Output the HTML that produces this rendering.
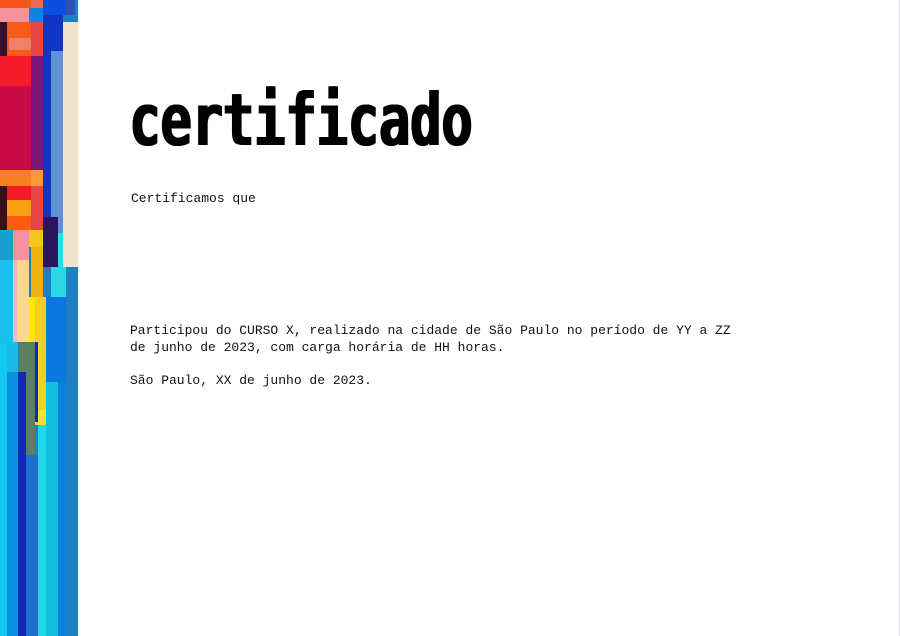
<!DOCTYPE html>
<html><head><meta charset="utf-8"><style>
html,body{margin:0;padding:0;background:#fff;}
body{width:900px;height:636px;position:relative;overflow:hidden;}
.r{position:absolute;}
.t{position:absolute;left:129px;top:80px;font-family:"DejaVu Sans Mono","Liberation Mono",monospace;font-weight:bold;font-size:72px;line-height:80px;color:#000;white-space:nowrap;transform-origin:0 0;transform:scaleX(0.72);text-shadow:1px 0 0 #000,2px 0 0 #000,-1px 0 0 #000;}
.p{position:absolute;left:130px;font-family:"Liberation Mono",monospace;font-size:13px;line-height:17px;color:#111;white-space:nowrap;}
</style></head><body>
<div class="r" style="left:0;top:0;width:78px;height:636px;background:#1e80c0"></div>
<div class="r" style="left:0;top:0;width:31px;height:8px;background:#f5561d"></div>
<div class="r" style="left:31px;top:0;width:12px;height:8px;background:#e86a50"></div>
<div class="r" style="left:0;top:8px;width:29px;height:14px;background:#f5929a"></div>
<div class="r" style="left:29px;top:8px;width:14px;height:14px;background:#0a86e0"></div>
<div class="r" style="left:0;top:22px;width:7px;height:34px;background:#3a1028"></div>
<div class="r" style="left:7px;top:22px;width:24px;height:34px;background:#f95a1a"></div>
<div class="r" style="left:9px;top:38px;width:22px;height:12px;background:#f0806a"></div>
<div class="r" style="left:31px;top:22px;width:12px;height:34px;background:#e84545"></div>
<div class="r" style="left:0;top:56px;width:31px;height:30px;background:#f71a2a"></div>
<div class="r" style="left:0;top:86px;width:31px;height:84px;background:#cc0a45"></div>
<div class="r" style="left:31px;top:56px;width:12px;height:114px;background:#7a1575"></div>
<div class="r" style="left:0;top:170px;width:31px;height:16px;background:#f98020"></div>
<div class="r" style="left:31px;top:170px;width:12px;height:16px;background:#f99a3a"></div>
<div class="r" style="left:0;top:186px;width:7px;height:44px;background:#3a1018"></div>
<div class="r" style="left:7px;top:186px;width:24px;height:14px;background:#f51a2a"></div>
<div class="r" style="left:7px;top:200px;width:24px;height:16px;background:#f9a010"></div>
<div class="r" style="left:7px;top:216px;width:24px;height:14px;background:#fb5a10"></div>
<div class="r" style="left:31px;top:186px;width:12px;height:44px;background:#e84545"></div>
<div class="r" style="left:0;top:230px;width:13px;height:30px;background:#1aa0d0"></div>
<div class="r" style="left:13px;top:230px;width:16px;height:30px;background:#f890a0"></div>
<div class="r" style="left:29px;top:230px;width:14px;height:17px;background:#f0c81a"></div>
<div class="r" style="left:31px;top:247px;width:12px;height:50px;background:#f0b010"></div>
<div class="r" style="left:0;top:260px;width:13px;height:84px;background:#18c0ee"></div>
<div class="r" style="left:13px;top:260px;width:4px;height:82px;background:#fbb0d0"></div>
<div class="r" style="left:17px;top:260px;width:12px;height:82px;background:#fdd88a"></div>
<div class="r" style="left:29px;top:297px;width:6px;height:45px;background:#fde800"></div>
<div class="r" style="left:35px;top:297px;width:11px;height:128px;background:#f5d020"></div>
<div class="r" style="left:43px;top:0;width:23px;height:15px;background:#0c4ee0"></div>
<div class="r" style="left:66px;top:0;width:9px;height:15px;background:#3050b0"></div>
<div class="r" style="left:43px;top:15px;width:20px;height:202px;background:#1035c0"></div>
<div class="r" style="left:51px;top:51px;width:12px;height:182px;background:#6090d8"></div>
<div class="r" style="left:63px;top:22px;width:15px;height:245px;background:#f0e2cc"></div>
<div class="r" style="left:43px;top:217px;width:15px;height:50px;background:#2a1560"></div>
<div class="r" style="left:58px;top:233px;width:5px;height:34px;background:#2ad8e8"></div>
<div class="r" style="left:51px;top:267px;width:15px;height:30px;background:#2ad8e8"></div>
<div class="r" style="left:46px;top:297px;width:20px;height:85px;background:#0a78e0"></div>
<div class="r" style="left:0;top:344px;width:7px;height:292px;background:#10c8f0"></div>
<div class="r" style="left:7px;top:342px;width:11px;height:30px;background:#1ab8e8"></div>
<div class="r" style="left:7px;top:372px;width:11px;height:264px;background:#0a90e0"></div>
<div class="r" style="left:18px;top:372px;width:8px;height:264px;background:#1428b8"></div>
<div class="r" style="left:19px;top:342px;width:16px;height:30px;background:#5a8060"></div>
<div class="r" style="left:26px;top:372px;width:9px;height:83px;background:#5a8060"></div>
<div class="r" style="left:26px;top:455px;width:12px;height:181px;background:#2070d0"></div>
<div class="r" style="left:35px;top:342px;width:3px;height:80px;background:#1428b8"></div>
<div class="r" style="left:38px;top:410px;width:8px;height:15px;background:#f5e030"></div>
<div class="r" style="left:38px;top:425px;width:8px;height:211px;background:#20d8e8"></div>
<div class="r" style="left:46px;top:382px;width:12px;height:254px;background:#10c0e0"></div>
<div class="r" style="left:58px;top:382px;width:8px;height:254px;background:#0a80e0"></div>
<div class="r" style="left:899px;top:0;width:1px;height:636px;background:#d8dce4"></div>

<div class="t">certificado</div>
<div class="p" style="top:190px;left:131px">Certificamos que</div>
<div class="p" style="top:322px">Participou do CURSO X, realizado na cidade de São Paulo no período de YY a ZZ<br>de junho de 2023, com carga horária de HH horas.</div>
<div class="p" style="top:372px">São Paulo, XX de junho de 2023.</div>
</body></html>
